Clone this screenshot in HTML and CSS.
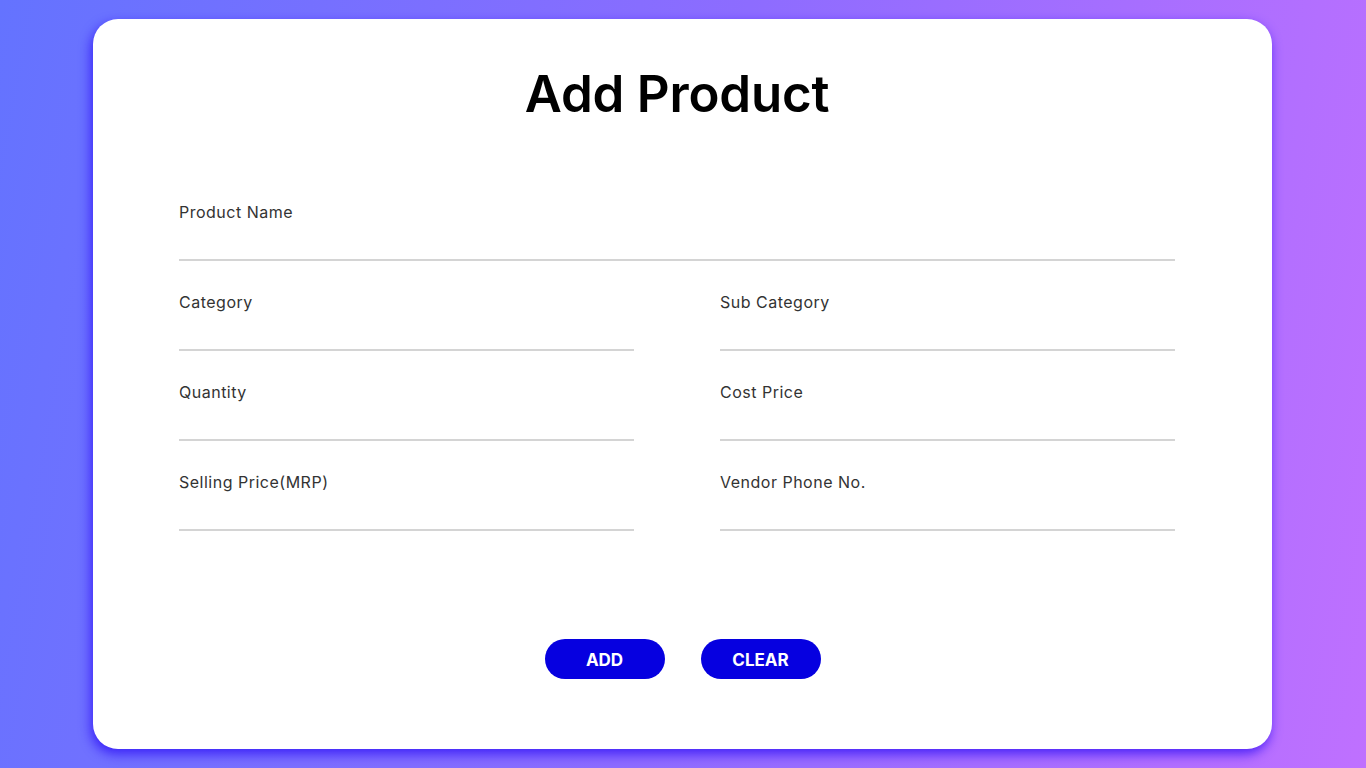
FILE: index.html
```html
<!DOCTYPE html>
<html lang="en">
<head>
<meta charset="utf-8">
<title>Add Product</title>
<link rel="stylesheet" href="styles.css">
</head>
<body>
<div class="card">
  <div class="content">
    <h1 class="title">Add Product</h1>
    <form class="form">
      <div class="field full">
        <label class="label">Product Name</label>
        <input class="input" type="text">
      </div>
      <div class="field">
        <label class="label">Category</label>
        <input class="input" type="text">
      </div>
      <div class="field">
        <label class="label">Sub Category</label>
        <input class="input" type="text">
      </div>
      <div class="field">
        <label class="label">Quantity</label>
        <input class="input" type="text">
      </div>
      <div class="field">
        <label class="label">Cost Price</label>
        <input class="input" type="text">
      </div>
      <div class="field">
        <label class="label">Selling Price(MRP)</label>
        <input class="input" type="text">
      </div>
      <div class="field">
        <label class="label">Vendor Phone No.</label>
        <input class="input" type="text">
      </div>
    </form>
  </div>
  <div class="actions">
    <button class="btn" type="button">ADD</button>
    <button class="btn" type="button">CLEAR</button>
  </div>
</div>
</body>
</html>
```
FILE: styles.css
```css
html, body {
  margin: 0;
  padding: 0;
}
body {
  width: 1366px;
  height: 768px;
  background: linear-gradient(100deg, #6473ff 0%, #8d6cff 50%, #bf70ff 100%);
  font-family: "Inter", "Open Sans", sans-serif;
  padding: 19px 0 0 93px;
  box-sizing: border-box;
  overflow: hidden;
}
.card {
  width: 1179px;
  height: 730px;
  background: #ffffff;
  border-radius: 25px;
  box-shadow: -2px 5px 12px rgba(40, 10, 245, 0.75);
  box-sizing: border-box;
  padding: 0 97px 0 86px;
  display: flex;
  flex-direction: column;
}
.content {
  width: 996px;
}
.title {
  margin: 0;
  padding-top: 45px;
  height: 60px;
  line-height: 60px;
  text-align: center;
  font-size: 51px;
  font-weight: 600;
  letter-spacing: -0.2px;
  color: #000;
}
.form {
  margin-top: 77px;
  display: grid;
  grid-template-columns: 455px 455px;
  column-gap: 86px;
  row-gap: 30px;
}
.field {
  display: flex;
  flex-direction: column;
  height: 60px;
}
.field.full {
  grid-column: 1 / span 2;
}
.label {
  font-size: 16px;
  line-height: 22px;
  color: #333;
  letter-spacing: 0.5px;
}
.input {
  border: none;
  border-bottom: 2px solid #d4d4d4;
  height: 38px;
  box-sizing: border-box;
  outline: none;
  padding: 0;
  font: inherit;
  background: transparent;
}
.actions {
  margin-top: 108px;
  display: flex;
  justify-content: center;
  gap: 36px;
  margin-left: 11px;
}
.btn {
  width: 120px;
  height: 40px;
  border: none;
  border-radius: 20px;
  background: #0600e0;
  color: #fff;
  font-family: "Inter", "Open Sans", sans-serif;
  font-weight: 700;
  font-size: 17px;
  padding: 2px 0 0;
}
```
